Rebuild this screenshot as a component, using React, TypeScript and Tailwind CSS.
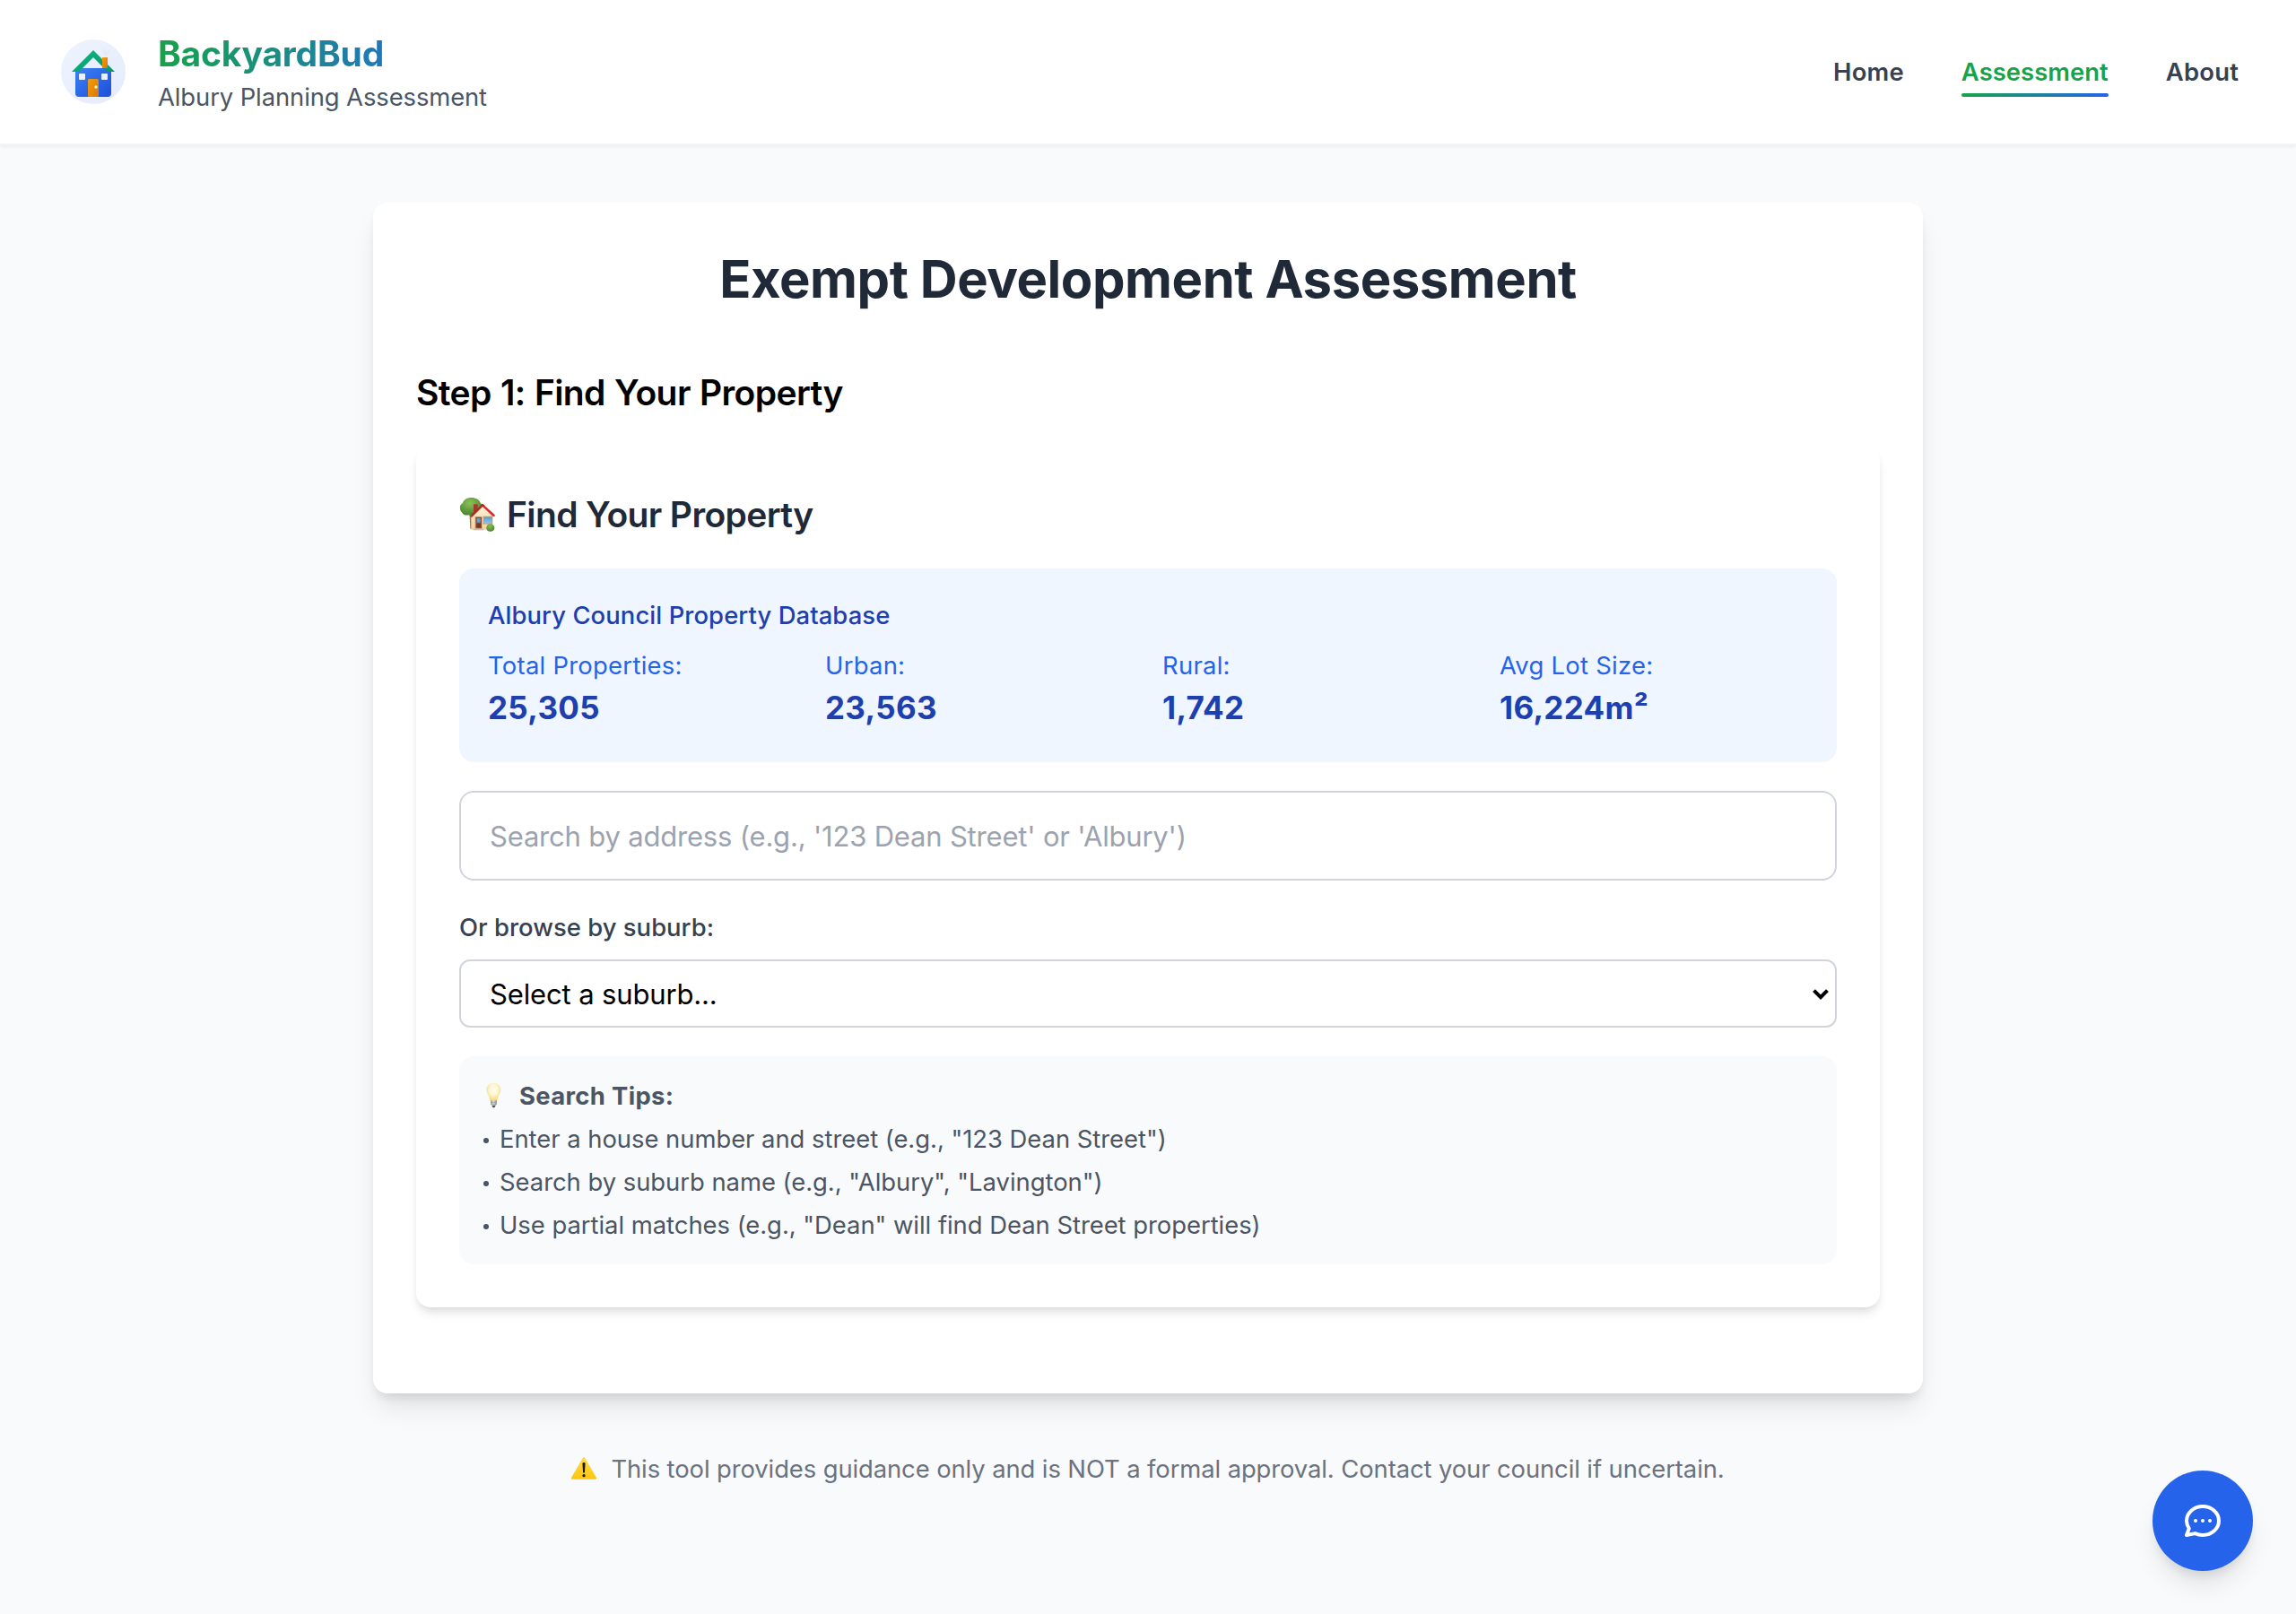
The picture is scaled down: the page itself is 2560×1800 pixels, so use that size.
import React from "react";

function LogoMark() {
  return (
    <svg className="h-20 w-20 shrink-0" viewBox="64 40 80 80" fill="none" aria-hidden="true">
      <defs>
        <linearGradient id="halo" x1="0" y1="0" x2="1" y2="1">
          <stop offset="0" stopColor="#edf3fe" />
          <stop offset="1" stopColor="#e6ebfc" />
        </linearGradient>
        <linearGradient id="walls" x1="0" y1="0" x2="1" y2="1">
          <stop offset="0" stopColor="#3b82f6" />
          <stop offset="1" stopColor="#1d4ed8" />
        </linearGradient>
        <linearGradient id="roof" x1="0" y1="0" x2="1" y2="1">
          <stop offset="0" stopColor="#10b981" />
          <stop offset="1" stopColor="#059669" />
        </linearGradient>
        <linearGradient id="wood" x1="0" y1="0" x2="1" y2="1">
          <stop offset="0" stopColor="#f59e0b" />
          <stop offset="1" stopColor="#d97706" />
        </linearGradient>
      </defs>
      <circle cx="104" cy="80" r="36" fill="url(#halo)" />
      <rect x="84" y="76" width="40" height="32" rx="4" fill="url(#walls)" />
      <path d="M104 56l24 24h-8l-16-16-16 16h-8z" fill="url(#roof)" />
      <rect x="98" y="88" width="12" height="20" rx="1.6" fill="url(#wood)" />
      <circle cx="107" cy="97" r="1.7" fill="#fef3c7" />
      <rect x="88" y="82" width="7" height="7" rx="1" fill="#eaf1fe" />
      <rect x="113" y="82" width="7" height="7" rx="1" fill="#eaf1fe" />
      <rect x="114" y="64" width="6" height="12" fill="url(#wood)" />
      <circle cx="118" cy="60" r="2" fill="#e5e7eb" fillOpacity=".8" />
      <circle cx="116" cy="56.5" r="1.5" fill="#e5e7eb" fillOpacity=".6" />
      <circle cx="121" cy="57" r="1.5" fill="#e5e7eb" fillOpacity=".6" />
    </svg>
  );
}

function GardenHouse() {
  return (
    <svg className="h-10 w-[41px] shrink-0" viewBox="21 27 123 120" aria-hidden="true">
      <defs>
        <radialGradient id="leaf" cx=".45" cy=".3" r=".75">
          <stop offset="0" stopColor="#8dbf58" />
          <stop offset="1" stopColor="#41802b" />
        </radialGradient>
        <linearGradient id="cream" x1="0" y1="0" x2="0" y2="1">
          <stop offset="0" stopColor="#fff3d6" />
          <stop offset="1" stopColor="#ecd3a3" />
        </linearGradient>
        <linearGradient id="pane" x1="0" y1="0" x2="0" y2="1">
          <stop offset="0" stopColor="#5b9bd8" />
          <stop offset="1" stopColor="#8cc4ee" />
        </linearGradient>
      </defs>
      <path d="M55 80h11v54h-8z" fill="#9a7b55" />
      <path
        d="M24 66c-2-9 3-15 9-18 2-10 13-18 27-18 15-1 28 6 32 17 7 5 8 14 4 21-3 9-12 12-20 13-4 8-16 12-24 7-9 2-18-1-21-8-4-3-7-8-7-14z"
        fill="url(#leaf)"
      />
      <path d="M69 52h14v24H69z" fill="#a8342a" />
      <path d="M99 56l33 32v49H61V93z" fill="url(#cream)" />
      <path d="M99 50l41 37v6h-6L99 60 63 96l-5-2 4-8z" fill="#d5302a" />
      <path d="M62 86l37-36 8 7-10 4-33 31z" fill="#ae2622" />
      <path d="M73 93h26v42H73z" fill="#d9bd8c" />
      <path d="M76 95h20v38H76z" fill="#8f4a30" />
      <path d="M80 99h12v14H80z" fill="#6a9fc9" />
      <path d="M80 117h12v12H80z" fill="#75371f" />
      <path d="M101 92h32v27h-32z" fill="#b9a277" />
      <path d="M104 95h26v21h-26z" fill="url(#pane)" />
      <path d="M68 134h34v5H68z" fill="#c8c0b1" />
      <path d="M112 131c0-8 6-13 13-13s14 5 14 13c0 7-6 12-14 12s-13-5-13-12z" fill="url(#leaf)" />
    </svg>
  );
}

function Bulb() {
  return (
    <svg className="mb-0.5 ml-1.5 h-[29px] w-[17px] shrink-0" viewBox="36 36 51 87" aria-hidden="true">
      <defs>
        <radialGradient id="glow" cx=".5" cy=".38" r=".6">
          <stop offset="0" stopColor="#fffef6" />
          <stop offset=".5" stopColor="#fff6cf" />
          <stop offset="1" stopColor="#f5d77a" />
        </radialGradient>
        <linearGradient id="metal" x1="0" y1="0" x2="1" y2="0">
          <stop offset="0" stopColor="#8d8d8d" />
          <stop offset=".45" stopColor="#e2e2e2" />
          <stop offset="1" stopColor="#8a8a8a" />
        </linearGradient>
      </defs>
      <path
        d="M61 38.500c13 0 23.500 9.500 23.500 23 0 9-4 14-7 20-2 5-3 9-4 13-.5 3-2 4-5 4h-15c-3 0-4.500-1-5-4-1-4-2-8-4-13-3-6-7-11-7-20 0-13.500 10.500-23 23.500-23z"
        fill="url(#glow)"
      />
      <path d="M51 97h21l-1 14c-3 3-16 3-19 0z" fill="url(#metal)" />
      <path d="M51 103h21M52 109h19" stroke="#8b8b8b" strokeWidth="1.500" />
      <path d="M55 113h13l-3 6c-2 2-5 2-7 0z" fill="#4c4c4c" />
    </svg>
  );
}

function Warning() {
  return (
    <svg className="mb-0.5 h-[25px] w-7 shrink-0" viewBox="0 0 28 25" aria-hidden="true">
      <defs>
        <linearGradient id="amber" x1="0" y1="0" x2="0" y2="1">
          <stop offset="0" stopColor="#ffdc4a" />
          <stop offset="1" stopColor="#fdc40f" />
        </linearGradient>
      </defs>
      <path d="M12.700.9c.6-1.100 2-1.100 2.600 0L27.800 22.800c.6 1 0 2-1.100 2H1.300c-1.100 0-1.700-1-1.100-2z" fill="url(#amber)" />
      <path d="M12.500 7.200c0-1.700 3-1.700 3 0l-.5 9.600c-.1 1.200-1.900 1.200-2 0z" fill="#1d1a10" />
      <circle cx="14" cy="20.700" r="1.600" fill="#1d1a10" />
    </svg>
  );
}

const stats = [
  { label: "Total Properties:", value: "25,305" },
  { label: "Urban:", value: "23,563" },
  { label: "Rural:", value: "1,742" },
  { label: "Avg Lot Size:", value: "16,224m²" },
];

const tips = [
  'Enter a house number and street (e.g., "123 Dean Street")',
  'Search by suburb name (e.g., "Albury", "Lavington")',
  'Use partial matches (e.g., "Dean" will find Dean Street properties)',
];

export default function App() {
  return (
    <div className="relative min-h-[1800px] bg-[#f9fafc] font-[Inter,sans-serif] text-[27.4px] leading-10 tracking-[-0.09px] text-black">
      <header className="flex h-[162px] items-center justify-between border-b-2 border-[#f3f4f6] bg-white px-16 shadow-[0_2px_4px_0_rgba(0,0,0,0.05)]">
        <div className="flex items-center gap-8">
          <LogoMark />
          <div>
            <div className="bg-linear-to-r/srgb from-[#16a34a] to-[#2563eb] bg-clip-text text-[39px] leading-[56px] font-bold tracking-[-0.2px] text-transparent">
              BackyardBud
            </div>
            <div className="text-[#4b5563]">Albury Planning Assessment</div>
          </div>
        </div>
        <nav className="flex gap-16 font-semibold tracking-[0.06px] text-[#374151]">
          <a className="tracking-[0.2px]">Home</a>
          <a className="relative text-[#16a34a]">
            Assessment
            <span className="absolute inset-x-0 -bottom-2 h-1 rounded-full bg-linear-to-r/srgb from-[#16a34a] to-[#2563eb]" />
          </a>
          <a className="tracking-[0.2px]">About</a>
        </nav>
      </header>

      <main className="mx-auto w-[1728px] pt-16">
        <section className="rounded-2xl bg-white p-12 pb-24 shadow-[0_20px_30px_-6px_rgba(0,0,0,0.1),0_8px_12px_-4px_rgba(0,0,0,0.1)]">
          <h1 className="mb-[62px] text-center text-[58px] leading-[74px] font-bold tracking-[-0.45px] text-[#1f2937]">
            Exempt Development Assessment
          </h1>
          <h2 className="mb-8 text-[39px] leading-[56px] font-semibold tracking-[-0.6px] [word-spacing:1px]">
            Step 1: Find Your Property
          </h2>

          <div className="rounded-2xl bg-white p-12 shadow-[0_8px_12px_-2px_rgba(0,0,0,0.1),0_4px_8px_-4px_rgba(0,0,0,0.1)]">
            <h3 className="mb-8 flex items-center gap-3 text-[39px] leading-[56px] font-semibold tracking-[-0.62px] text-[#1f2937]">
              <GardenHouse />
              Find Your Property
            </h3>

            <div className="mb-8 rounded-2xl bg-[#eff6ff] p-8">
              <div className="mb-4 font-medium tracking-[0.09px] text-[#1e40af]">Albury Council Property Database</div>
              <div className="grid grid-cols-4 gap-8">
                {stats.map((s) => (
                  <div key={s.label}>
                    <div className="tracking-[0.28px] text-[#2563eb]">{s.label}</div>
                    <div className="pb-0.5 text-[35px] leading-[54px] font-bold tracking-[0.3px] text-[#1e40af]">{s.value}</div>
                  </div>
                ))}
              </div>
            </div>

            <input
              className="mb-8 block h-[100px] w-full rounded-2xl border-2 border-[#d1d5db] bg-white px-8 text-[31px] tracking-[-0.19px] outline-none placeholder:text-[#9ca3af]"
              placeholder="Search by address (e.g., '123 Dean Street' or 'Albury')"
            />

            <label className="mb-4 block font-medium tracking-[0.04px] text-[#374151]">Or browse by suburb:</label>
            <div className="relative mb-8">
              <select className="block h-[76px] w-full appearance-none rounded-xl border-2 border-[#d1d5db] bg-white px-8 pt-0.5 text-[31px] tracking-[-0.14px] outline-none">
                <option>Select a suburb...</option>
              </select>
              <svg className="pointer-events-none absolute top-8 right-2 h-3.5 w-5" viewBox="0 0 20 14" fill="none">
                <path d="M2.500 2.700l7.500 7.500 7.500-7.500" stroke="#000" strokeWidth="4" />
              </svg>
            </div>

            <div className="flex flex-col gap-2 rounded-2xl bg-[#f9fafc] p-6 text-[#4b5563]">
              <div className="flex items-center gap-5 font-bold tracking-[0.35px]">
                <Bulb />
                Search Tips:
              </div>
              {tips.map((t) => (
                <div key={t} className="flex items-center tracking-[-0.02px]">
                  <span className="mr-3 ml-[3px] h-1.5 w-1.5 translate-y-0.5 rounded-full bg-[#4b5563]" />
                  {t}
                </div>
              ))}
            </div>
          </div>
        </section>
      </main>

      <footer className="mt-16 flex items-center justify-center gap-4 text-[#6b7280]">
        <Warning />
        This tool provides guidance only and is NOT a formal approval. Contact your council if uncertain.
      </footer>

      <button
        aria-label="Open chat"
        className="absolute right-12 bottom-12 flex h-28 w-28 items-center justify-center rounded-full bg-[#2563eb] text-white shadow-[0_20px_30px_-6px_rgba(0,0,0,0.1),0_8px_12px_-4px_rgba(0,0,0,0.1)]"
      >
        <svg className="h-12 w-12" viewBox="0 0 24 24" fill="none" stroke="currentColor" strokeWidth="2" strokeLinecap="round" strokeLinejoin="round">
          <path d="M8 12h.01M12 12h.01M16 12h.01M21 12c0 4.418-4.03 8-9 8a9.863 9.863 0 01-4.255-.949L3 20l1.395-3.72C3.512 15.042 3 13.574 3 12c0-4.418 4.03-8 9-8s9 3.582 9 8z" />
        </svg>
      </button>
    </div>
  );
}
